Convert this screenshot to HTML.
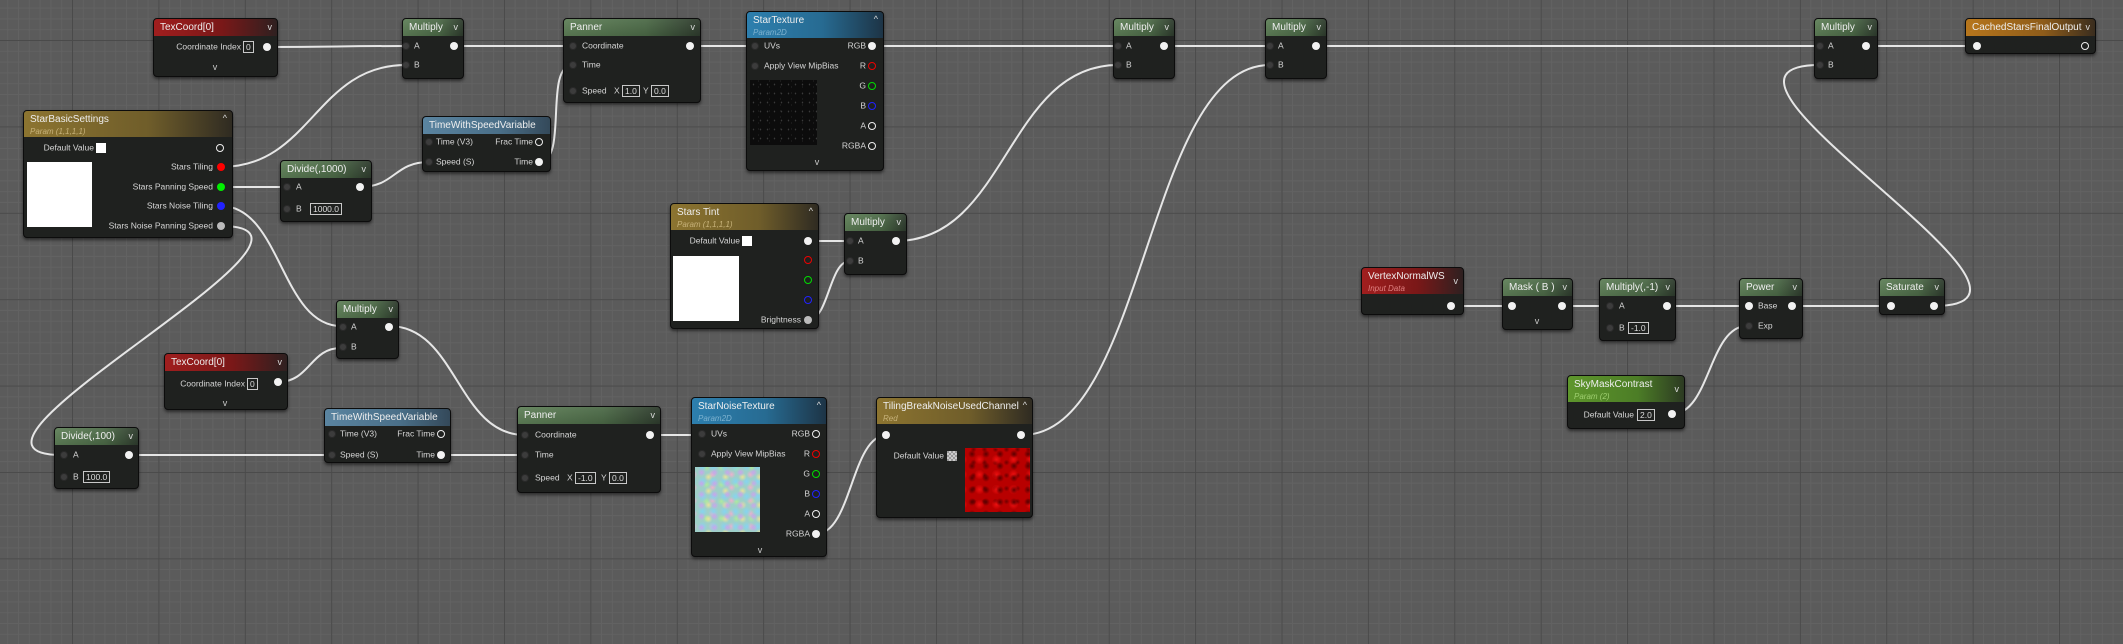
<!DOCTYPE html>
<html><head><meta charset="utf-8">
<style>
*{margin:0;padding:0}
body{width:2123px;height:644px;overflow:hidden;position:relative;font-family:"Liberation Sans",sans-serif;
background-color:#5b5b5b;
background-image:
linear-gradient(to right,#4a4a4a 1px,transparent 1px),
linear-gradient(to bottom,#4a4a4a 1px,transparent 1px),
linear-gradient(to right,#626262 1px,transparent 1px),
linear-gradient(to bottom,#626262 1px,transparent 1px);
background-size:86.4px 86.4px,86.4px 86.4px,10.8px 10.8px,10.8px 10.8px;
background-position:72px 0,0 40px,72px 0,0 40px;}
svg.w{position:absolute;left:0;top:0}
.n{position:absolute;background:#1f211f;border:1px solid #0c0c0c;border-radius:4px;box-shadow:0 2px 3px rgba(0,0,0,.55);box-sizing:border-box;overflow:hidden}
.h{height:17px;line-height:17px;padding-left:6px;font-size:10px;color:#eee;position:relative;white-space:nowrap}
.h2{height:26px;line-height:14px;padding-top:2px;box-sizing:border-box}
.h2 i{display:block;font-size:8px;font-style:italic;line-height:10px}
.g{background:linear-gradient(180deg,rgba(255,255,255,.06),rgba(0,0,0,.1)),linear-gradient(90deg,#5f8058,#4c6a47 60%,#2e3b2d)}
.rd{background:linear-gradient(90deg,#a01e1e,#7a1818 55%,#2e2020)}
.bl{background:linear-gradient(90deg,#2d7fae,#276b92 55%,#1d3446)}
.gd{background:linear-gradient(90deg,#8c7430,#6f5d2a 60%,#2f2b22)}
.tw{background:linear-gradient(90deg,#5a84a0,#4a6f88 60%,#34495a)}
.or{background:linear-gradient(90deg,#b7761c,#8e5c1a 60%,#3a2d1e)}
.lg{background:linear-gradient(90deg,#5e962c,#4c7d26 60%,#2c3a22)}
.h .c{position:absolute;right:5px;top:0;font-size:9px;color:#ddd}
.p{position:absolute;width:8px;height:8px;border-radius:50%;transform:translate(-50%,-50%);box-sizing:border-box}
.pi{background:#3c3c3c;border:1px solid #2a2a2a}
.pw{background:#f2f2f2}
.rg{border:1.6px solid #eee}
.t{position:absolute;font-size:8.5px;line-height:11px;transform:translateY(-50%);white-space:nowrap;color:#d6d6d6}
.r{transform:translate(-100%,-50%)}
.v{position:absolute;border:1px solid #c8c8c8;font-size:8.5px;line-height:10px;padding:0 2px;transform:translateY(-50%);color:#ddd;white-space:nowrap}
.ch{position:absolute;font-size:9px;color:#ccc;transform:translate(-50%,-50%)}
.bx{position:absolute}
</style></head><body>
<svg class="w" width="2123" height="644" fill="none" stroke="#e6e6e6" stroke-width="2">
<path d="M267 47 C337 47 336 46 406 46"/>
<path d="M454 46 L573 46"/>
<path d="M690 46 L755 46"/>
<path d="M872 46 L1118 46"/>
<path d="M1164 46 L1270 46"/>
<path d="M1316 46 L1820 46"/>
<path d="M1866 46 L1977 46"/>
<path d="M221 167 C311 167 316 65 406 65"/>
<path d="M221 187 L287 187"/>
<path d="M360 187 C395 187 394 162 429 162"/>
<path d="M539 162 C569 162 543 65 573 65"/>
<path d="M221 206 C281 206 281 326 341 326"/>
<path d="M221 226 C371 226 -88 455 62 455"/>
<path d="M278 382 C310 382 310 348 341 348"/>
<path d="M389 326 C457 326 457 435 525 435"/>
<path d="M129 455 L332 455"/>
<path d="M441 455 L525 455"/>
<path d="M650 435 L700 435"/>
<path d="M816 534 C852 534 851 435 887 435"/>
<path d="M1022 435 C1146 435 1146 65 1270 65"/>
<path d="M808 241 L850 241"/>
<path d="M808 320 C829 320 829 261 850 261"/>
<path d="M896 241 C1007 241 1007 65 1118 65"/>
<path d="M1451 306 L1510 306"/>
<path d="M1562 306 L1607 306"/>
<path d="M1665 306 L1747 306"/>
<path d="M1791 306 L1890 306"/>
<path d="M1934 306 C2094 306 1660 65 1820 65"/>
<path d="M1672 414 C1710 414 1709 326 1747 326"/>
</svg>

<div class="n" style="left:153px;top:18px;width:125px;height:59px"><div class="h rd">TexCoord[0]<span class="c">v</span></div></div>
<span class="t r" style="left:241px;top:47px">Coordinate Index</span><span class="v" style="left:243px;top:47px">0</span>
<i class="p pw" style="left:267px;top:47px"></i><span class="ch" style="left:215px;top:67px">v</span>

<div class="n" style="left:402px;top:18px;width:62px;height:61px"><div class="h g">Multiply<span class="c">v</span></div></div>
<i class="p pi" style="left:406px;top:46px"></i><span class="t" style="left:414px;top:46px">A</span>
<i class="p pi" style="left:406px;top:65px"></i><span class="t" style="left:414px;top:65px">B</span>
<i class="p pw" style="left:454px;top:46px"></i>

<div class="n" style="left:563px;top:18px;width:138px;height:85px"><div class="h g">Panner<span class="c">v</span></div></div>
<i class="p pi" style="left:573px;top:46px"></i><span class="t" style="left:582px;top:46px">Coordinate</span>
<i class="p pi" style="left:573px;top:65px"></i><span class="t" style="left:582px;top:65px">Time</span>
<i class="p pi" style="left:573px;top:91px"></i><span class="t" style="left:582px;top:91px">Speed</span>
<span class="t" style="left:614px;top:91px">X</span><span class="v" style="left:622px;top:91px">1.0</span>
<span class="t" style="left:643px;top:91px">Y</span><span class="v" style="left:651px;top:91px">0.0</span>
<i class="p pw" style="left:690px;top:46px"></i>

<div class="n" style="left:746px;top:11px;width:138px;height:160px"><div class="h h2 bl">StarTexture<i style="color:#7fb3d0">Param2D</i><span class="c">^</span></div></div>
<i class="p pi" style="left:755px;top:46px"></i><span class="t" style="left:764px;top:46px">UVs</span>
<i class="p pi" style="left:755px;top:66px"></i><span class="t" style="left:764px;top:66px">Apply View MipBias</span>
<span class="t r" style="left:866px;top:46px">RGB</span><i class="p pw" style="left:872px;top:46px"></i>
<span class="t r" style="left:866px;top:66px">R</span><i class="p rg" style="left:872px;top:66px;border-color:#e00"></i>
<span class="t r" style="left:866px;top:86px">G</span><i class="p rg" style="left:872px;top:86px;border-color:#0d0"></i>
<span class="t r" style="left:866px;top:106px">B</span><i class="p rg" style="left:872px;top:106px;border-color:#22f"></i>
<span class="t r" style="left:866px;top:126px">A</span><i class="p rg" style="left:872px;top:126px"></i>
<span class="t r" style="left:866px;top:146px">RGBA</span><i class="p rg" style="left:872px;top:146px"></i>
<div class="bx" style="left:750px;top:80px;width:67px;height:65px;background:#0c0c0c;background-image:radial-gradient(#3a3a3a 0.5px,transparent 0.9px),radial-gradient(#2a2a2a 0.5px,transparent 0.9px);background-size:7px 9px,11px 6px;background-position:0 0,3px 4px"></div>
<span class="ch" style="left:817px;top:162px">v</span>

<div class="n" style="left:23px;top:110px;width:210px;height:128px"><div class="h h2 gd">StarBasicSettings<i style="color:#c7b27a">Param (1,1,1,1)</i><span class="c">^</span></div></div>
<span class="t r" style="left:94px;top:148px">Default Value</span><div class="bx" style="left:96px;top:143px;width:10px;height:10px;background:#fff"></div>
<i class="p rg" style="left:220px;top:148px"></i>
<div class="bx" style="left:27px;top:162px;width:65px;height:65px;background:#fff"></div>
<span class="t r" style="left:213px;top:167px">Stars Tiling</span><i class="p" style="left:221px;top:167px;background:#f00"></i>
<span class="t r" style="left:213px;top:187px">Stars Panning Speed</span><i class="p" style="left:221px;top:187px;background:#0e0"></i>
<span class="t r" style="left:213px;top:206px">Stars Noise Tiling</span><i class="p" style="left:221px;top:206px;background:#22f"></i>
<span class="t r" style="left:213px;top:226px">Stars Noise Panning Speed</span><i class="p" style="left:221px;top:226px;background:#bbb"></i>

<div class="n" style="left:422px;top:116px;width:129px;height:56px"><div class="h tw">TimeWithSpeedVariable</div></div>
<i class="p pi" style="left:429px;top:142px"></i><span class="t" style="left:436px;top:142px">Time (V3)</span>
<span class="t r" style="left:533px;top:142px">Frac Time</span><i class="p rg" style="left:539px;top:142px"></i>
<i class="p pi" style="left:429px;top:162px"></i><span class="t" style="left:436px;top:162px">Speed (S)</span>
<span class="t r" style="left:533px;top:162px">Time</span><i class="p pw" style="left:539px;top:162px"></i>

<div class="n" style="left:280px;top:160px;width:92px;height:62px"><div class="h g">Divide(,1000)<span class="c">v</span></div></div>
<i class="p pi" style="left:287px;top:187px"></i><span class="t" style="left:296px;top:187px">A</span>
<i class="p pi" style="left:287px;top:209px"></i><span class="t" style="left:296px;top:209px">B</span><span class="v" style="left:310px;top:209px">1000.0</span>
<i class="p pw" style="left:360px;top:187px"></i>

<div class="n" style="left:670px;top:203px;width:149px;height:126px"><div class="h h2 gd">Stars Tint<i style="color:#c7b27a">Param (1,1,1,1)</i><span class="c">^</span></div></div>
<span class="t r" style="left:740px;top:241px">Default Value</span><div class="bx" style="left:742px;top:236px;width:10px;height:10px;background:#fff"></div>
<i class="p pw" style="left:808px;top:241px"></i>
<i class="p rg" style="left:808px;top:260px;border-color:#e00"></i>
<i class="p rg" style="left:808px;top:280px;border-color:#0d0"></i>
<i class="p rg" style="left:808px;top:300px;border-color:#22f"></i>
<span class="t r" style="left:801px;top:320px">Brightness</span><i class="p" style="left:808px;top:320px;background:#bbb"></i>
<div class="bx" style="left:673px;top:256px;width:66px;height:65px;background:#fff"></div>

<div class="n" style="left:844px;top:213px;width:63px;height:62px"><div class="h g">Multiply<span class="c">v</span></div></div>
<i class="p pi" style="left:850px;top:241px"></i><span class="t" style="left:858px;top:241px">A</span>
<i class="p pi" style="left:850px;top:261px"></i><span class="t" style="left:858px;top:261px">B</span>
<i class="p pw" style="left:896px;top:241px"></i>

<div class="n" style="left:1113px;top:18px;width:62px;height:61px"><div class="h g">Multiply<span class="c">v</span></div></div>
<i class="p pi" style="left:1118px;top:46px"></i><span class="t" style="left:1126px;top:46px">A</span>
<i class="p pi" style="left:1118px;top:65px"></i><span class="t" style="left:1126px;top:65px">B</span>
<i class="p pw" style="left:1164px;top:46px"></i>
<div class="n" style="left:1265px;top:18px;width:62px;height:61px"><div class="h g">Multiply<span class="c">v</span></div></div>
<i class="p pi" style="left:1270px;top:46px"></i><span class="t" style="left:1278px;top:46px">A</span>
<i class="p pi" style="left:1270px;top:65px"></i><span class="t" style="left:1278px;top:65px">B</span>
<i class="p pw" style="left:1316px;top:46px"></i>
<div class="n" style="left:1814px;top:18px;width:64px;height:61px"><div class="h g">Multiply<span class="c">v</span></div></div>
<i class="p pi" style="left:1820px;top:46px"></i><span class="t" style="left:1828px;top:46px">A</span>
<i class="p pi" style="left:1820px;top:65px"></i><span class="t" style="left:1828px;top:65px">B</span>
<i class="p pw" style="left:1866px;top:46px"></i>

<div class="n" style="left:1965px;top:18px;width:131px;height:36px"><div class="h or">CachedStarsFinalOutput<span class="c">v</span></div></div>
<i class="p pw" style="left:1977px;top:46px"></i><i class="p rg" style="left:2085px;top:46px"></i>

<div class="n" style="left:336px;top:300px;width:63px;height:59px"><div class="h g">Multiply<span class="c">v</span></div></div>
<i class="p pi" style="left:343px;top:327px"></i><span class="t" style="left:351px;top:327px">A</span>
<i class="p pi" style="left:343px;top:347px"></i><span class="t" style="left:351px;top:347px">B</span>
<i class="p pw" style="left:389px;top:327px"></i>

<div class="n" style="left:164px;top:353px;width:124px;height:57px"><div class="h rd">TexCoord[0]<span class="c">v</span></div></div>
<span class="t r" style="left:245px;top:384px">Coordinate Index</span><span class="v" style="left:247px;top:384px">0</span>
<i class="p pw" style="left:278px;top:382px"></i><span class="ch" style="left:225px;top:403px">v</span>

<div class="n" style="left:54px;top:427px;width:85px;height:62px"><div class="h g">Divide(,100)<span class="c">v</span></div></div>
<i class="p pi" style="left:64px;top:455px"></i><span class="t" style="left:73px;top:455px">A</span>
<i class="p pi" style="left:64px;top:477px"></i><span class="t" style="left:73px;top:477px">B</span><span class="v" style="left:83px;top:477px">100.0</span>
<i class="p pw" style="left:129px;top:455px"></i>

<div class="n" style="left:324px;top:408px;width:127px;height:55px"><div class="h tw">TimeWithSpeedVariable</div></div>
<i class="p pi" style="left:332px;top:434px"></i><span class="t" style="left:340px;top:434px">Time (V3)</span>
<span class="t r" style="left:435px;top:434px">Frac Time</span><i class="p rg" style="left:441px;top:434px"></i>
<i class="p pi" style="left:332px;top:455px"></i><span class="t" style="left:340px;top:455px">Speed (S)</span>
<span class="t r" style="left:435px;top:455px">Time</span><i class="p pw" style="left:441px;top:455px"></i>

<div class="n" style="left:517px;top:406px;width:144px;height:87px"><div class="h g">Panner<span class="c">v</span></div></div>
<i class="p pi" style="left:525px;top:435px"></i><span class="t" style="left:535px;top:435px">Coordinate</span>
<i class="p pi" style="left:525px;top:455px"></i><span class="t" style="left:535px;top:455px">Time</span>
<i class="p pi" style="left:525px;top:478px"></i><span class="t" style="left:535px;top:478px">Speed</span>
<span class="t" style="left:567px;top:478px">X</span><span class="v" style="left:575px;top:478px">-1.0</span>
<span class="t" style="left:601px;top:478px">Y</span><span class="v" style="left:609px;top:478px">0.0</span>
<i class="p pw" style="left:650px;top:435px"></i>

<div class="n" style="left:691px;top:397px;width:136px;height:160px"><div class="h h2 bl">StarNoiseTexture<i style="color:#7fb3d0">Param2D</i><span class="c">^</span></div></div>
<i class="p pi" style="left:702px;top:434px"></i><span class="t" style="left:711px;top:434px">UVs</span>
<i class="p pi" style="left:702px;top:454px"></i><span class="t" style="left:711px;top:454px">Apply View MipBias</span>
<span class="t r" style="left:810px;top:434px">RGB</span><i class="p rg" style="left:816px;top:434px"></i>
<span class="t r" style="left:810px;top:454px">R</span><i class="p rg" style="left:816px;top:454px;border-color:#e00"></i>
<span class="t r" style="left:810px;top:474px">G</span><i class="p rg" style="left:816px;top:474px;border-color:#0d0"></i>
<span class="t r" style="left:810px;top:494px">B</span><i class="p rg" style="left:816px;top:494px;border-color:#22f"></i>
<span class="t r" style="left:810px;top:514px">A</span><i class="p rg" style="left:816px;top:514px"></i>
<span class="t r" style="left:810px;top:534px">RGBA</span><i class="p pw" style="left:816px;top:534px"></i>
<div class="bx" style="left:695px;top:467px;width:65px;height:65px;background:#9fcfc8;background-image:radial-gradient(circle,#c9a5ec 0,transparent 4px),radial-gradient(circle,#e8e29a 0,transparent 4px),radial-gradient(circle,#86d4f0 0,transparent 5px),radial-gradient(circle,#eeb0cc 0,transparent 4px),radial-gradient(circle,#aeea9c 0,transparent 4px);background-size:13px 11px,17px 14px,11px 15px,19px 13px,15px 17px;background-position:0 0,5px 3px,2px 7px,8px 1px,4px 9px"></div>
<span class="ch" style="left:760px;top:550px">v</span>

<div class="n" style="left:876px;top:397px;width:157px;height:121px"><div class="h h2 gd">TilingBreakNoiseUsedChannel<i style="color:#c7b27a">Red</i><span class="c">^</span></div></div>
<i class="p pw" style="left:886px;top:435px"></i><i class="p pw" style="left:1021px;top:435px"></i>
<span class="t r" style="left:944px;top:456px">Default Value</span>
<div class="bx" style="left:947px;top:451px;width:10px;height:10px;background:#999;background-image:linear-gradient(45deg,#ccc 25%,transparent 25%,transparent 75%,#ccc 75%),linear-gradient(45deg,#ccc 25%,transparent 25%,transparent 75%,#ccc 75%);background-size:4px 4px;background-position:0 0,2px 2px"></div>
<div class="bx" style="left:965px;top:448px;width:65px;height:64px;background:#b80000;background-image:radial-gradient(circle,#5a0000 0,transparent 4px),radial-gradient(circle,#ee1010 0,transparent 5px),radial-gradient(circle,#700000 0,transparent 3px);background-size:14px 12px,17px 15px,11px 13px;background-position:0 0,6px 4px,3px 8px"></div>

<div class="n" style="left:1361px;top:267px;width:103px;height:48px"><div class="h h2 rd">VertexNormalWS<i style="color:#e08080">Input Data</i><span class="c" style="top:6px">v</span></div></div>
<i class="p pw" style="left:1451px;top:306px"></i>

<div class="n" style="left:1502px;top:278px;width:71px;height:52px"><div class="h g">Mask ( B )<span class="c">v</span></div></div>
<i class="p pw" style="left:1512px;top:306px"></i><i class="p pw" style="left:1562px;top:306px"></i>
<span class="ch" style="left:1537px;top:321px">v</span>

<div class="n" style="left:1599px;top:278px;width:77px;height:63px"><div class="h g">Multiply(,-1)<span class="c">v</span></div></div>
<i class="p pi" style="left:1610px;top:306px"></i><span class="t" style="left:1619px;top:306px">A</span>
<i class="p pi" style="left:1610px;top:328px"></i><span class="t" style="left:1619px;top:328px">B</span><span class="v" style="left:1628px;top:328px">-1.0</span>
<i class="p pw" style="left:1667px;top:306px"></i>

<div class="n" style="left:1739px;top:278px;width:64px;height:61px"><div class="h g">Power<span class="c">v</span></div></div>
<i class="p pw" style="left:1749px;top:306px"></i><span class="t" style="left:1758px;top:306px">Base</span>
<i class="p pi" style="left:1749px;top:326px"></i><span class="t" style="left:1758px;top:326px">Exp</span>
<i class="p pw" style="left:1792px;top:306px"></i>

<div class="n" style="left:1879px;top:278px;width:66px;height:37px"><div class="h g">Saturate<span class="c">v</span></div></div>
<i class="p pw" style="left:1891px;top:306px"></i><i class="p pw" style="left:1934px;top:306px"></i>

<div class="n" style="left:1567px;top:375px;width:118px;height:54px"><div class="h h2 lg">SkyMaskContrast<i style="color:#9fcf70">Param (2)</i><span class="c" style="top:6px">v</span></div></div>
<span class="t r" style="left:1634px;top:415px">Default Value</span><span class="v" style="left:1637px;top:415px">2.0</span>
<i class="p pw" style="left:1672px;top:414px"></i>
</body></html>
